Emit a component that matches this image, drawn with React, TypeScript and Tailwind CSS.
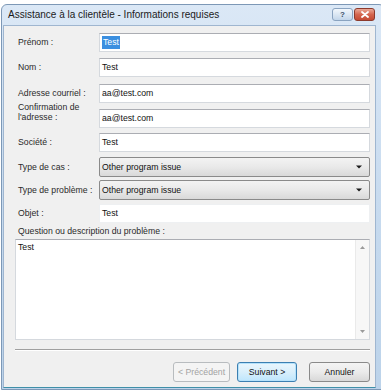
import React from 'react';

const inputCls =
  'h-[19px] w-[271px] bg-white border border-[#d5d9de] border-t-[#abadb3] flex items-center pl-[2px] text-[#111]';

function TextRow({ label, value, mt }: { label: string; value: string; mt: string }) {
  return (
    <div className={`flex items-center ${mt}`}>
      <div className="w-[84px] pl-[3px] text-[#2a2a2a]">{label}</div>
      <div className={inputCls}>{value}</div>
    </div>
  );
}

function SelectRow({ label, value, mt }: { label: string; value: string; mt: string }) {
  return (
    <div className={`flex items-center ${mt}`}>
      <div className="w-[84px] pl-[3px] text-[#2a2a2a] whitespace-nowrap">{label}</div>
      <div className="h-[20px] w-[271px] rounded-[2px] border border-[#8a8a8a] bg-gradient-to-b from-[#f3f3f3] via-[#e9e9e9] to-[#d9d9d9] flex items-center justify-between pl-[2px] pr-[7px] text-[#111]">
        <span>{value}</span>
        <svg width="6" height="4" viewBox="0 0 6 4">
          <path d="M0 0.5h6L3 3.5z" fill="#1a1a1a" />
        </svg>
      </div>
    </div>
  );
}

export default function App() {
  return (
    <div className="w-[381px] h-[390px] overflow-hidden bg-white font-['Liberation_Sans',Arial,sans-serif] text-[8.7px] leading-[11px]">
      {/* window frame */}
      <div className="ml-[1px] mt-[4px] w-[384px] h-[386px] flex flex-col rounded-t-[6px] border border-[#7d98b6] bg-gradient-to-b from-[#dbe8f6] via-[#c8dbef] to-[#bcd3ea]">
        {/* title bar */}
        <div className="h-[20px] flex items-start pl-[6px] pr-[9px]">
          <span className="mt-[4px] text-[10px] leading-[12px] text-[#1b1b1b]">
            Assistance à la clientèle - Informations requises
          </span>
          <div className="ml-auto mt-[3px] flex gap-[1px]">
            <div className="w-[21px] h-[13px] rounded-[3px] border border-[#8aa3c0] bg-gradient-to-b from-[#f2f7fc] via-[#dbe7f3] to-[#c3d6ea] flex items-center justify-center text-[8px] leading-none text-[#3b4f68] font-bold">
              ?
            </div>
            <div className="w-[21px] h-[13px] rounded-[3px] border border-[#8c3a2c] bg-gradient-to-b from-[#eaa896] via-[#d4664f] to-[#c44a33] flex items-center justify-center">
              <svg width="8" height="7" viewBox="0 0 8 7">
                <path d="M1 1l6 5M7 1L1 6" stroke="#fff" strokeWidth="1.8" strokeLinecap="round" />
              </svg>
            </div>
          </div>
        </div>

        {/* client area */}
        <div className="ml-[1px] mr-[8px] mb-[1px] flex-1 bg-[#f0f0f0] border border-[#9fb6d0] border-b-[#3f8fa8] pl-[11px] pr-[3px] pt-[7px] flex flex-col">
          <div className="flex items-center">
            <div className="w-[84px] pl-[3px] text-[#2a2a2a]">Prénom :</div>
            <div className={inputCls}>
              <span className="bg-[#3b8fe0] text-white px-[1px] leading-[13px]">Test</span>
            </div>
          </div>
          <TextRow label="Nom :" value="Test" mt="mt-[6px]" />
          <TextRow label="Adresse courriel :" value="aa@test.com" mt="mt-[7px]" />
          <div className="flex items-start mt-[6px]">
            <div className="w-[84px] pl-[3px] text-[#2a2a2a] leading-[10px] -mt-[7px]">
              Confirmation de
              <br />
              l'adresse :
            </div>
            <div className={inputCls}>aa@test.com</div>
          </div>
          <TextRow label="Société :" value="Test" mt="mt-[5px]" />
          <SelectRow label="Type de cas :" value="Other program issue" mt="mt-[5px]" />
          <SelectRow label="Type de problème :" value="Other program issue" mt="mt-[3px]" />
          <div className="flex items-center mt-[4px]">
            <div className="w-[84px] pl-[3px] text-[#2a2a2a]">Objet :</div>
            <div className="h-[19px] w-[271px] bg-white border border-[#eef0f2] flex items-center pl-[2px] text-[#111]">
              Test
            </div>
          </div>

          <div className="mt-[3px] pl-[3px] text-[#2a2a2a]">Question ou description du problème :</div>

          <div className="mt-[2px] h-[101px] w-[355px] bg-white border border-[#d5d9de] border-t-[#abadb3] flex">
            <div className="flex-1 pl-[2px] pt-[2px] text-[#111]">Test</div>
            <div className="w-[14px] bg-[#f7f7f7] border-l border-[#eaeaea] flex flex-col items-center justify-between py-[6px]">
              <svg width="5" height="3" viewBox="0 0 5 3">
                <path d="M0 3h5L2.5 0z" fill="#9a9a9a" />
              </svg>
              <svg width="5" height="3" viewBox="0 0 5 3">
                <path d="M0 0h5L2.5 3z" fill="#9a9a9a" />
              </svg>
            </div>
          </div>

          <div className="mt-[9px] w-[355px] h-[2px] border-t border-[#a0a0a0] border-b border-b-white" />

          <div className="mt-[11px] w-[355px] flex justify-end">
            <div className="w-[57px] h-[20px] rounded-[3px] border border-[#b8bcbf] bg-[#f4f4f4] flex items-center justify-center text-[#a3a3a3]">
              &lt; Précédent
            </div>
            <div className="ml-[7px] w-[60px] h-[20px] rounded-[3px] border border-[#3c7fb1] bg-gradient-to-b from-[#eaf6fd] via-[#d9effb] to-[#bee6fd] flex items-center justify-center text-[#111] shadow-[inset_0_0_0_1px_#b5e2fb]">
              Suivant &gt;
            </div>
            <div className="ml-[12px] w-[61px] h-[20px] rounded-[3px] border border-[#8a8a8a] bg-gradient-to-b from-[#f4f4f4] via-[#ebebeb] to-[#d8d8d8] flex items-center justify-center text-[#111]">
              Annuler
            </div>
          </div>
        </div>
      </div>
    </div>
  );
}
